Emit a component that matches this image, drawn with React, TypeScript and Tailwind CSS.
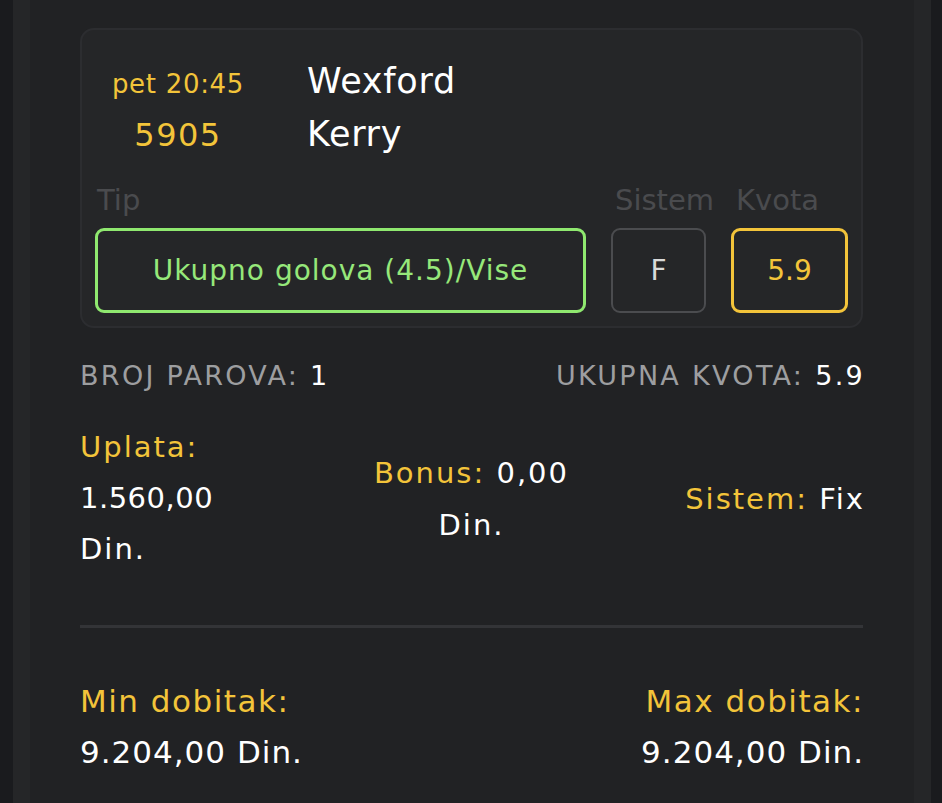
const font = "font-['DejaVu_Sans',sans-serif]";

export default function App() {
  return (
    <div className={`${font} min-h-screen bg-[#1a1b1e] pl-[13px] pr-[11px]`}>
      <div className="min-h-[803px] bg-[#252628] px-[17px]">
        <div className="min-h-[803px] bg-[#212224] pl-[50px] pr-[51px] pt-[28px]">
          {/* match card */}
          <div className="rounded-[14px] border-2 border-[#2c2d30] bg-[#252628] px-[13px] pt-[25px] pb-[13px]">
            <div className="flex h-[53px] items-baseline leading-[53px]">
              <div className="ml-[13px] w-[140px] whitespace-nowrap text-center text-[26px] tracking-[0.7px] text-[#f3c43a]">pet 20:45</div>
              <div className="ml-[59px] text-[35px] tracking-[0.7px] text-white">Wexford</div>
            </div>
            <div className="flex h-[53px] items-baseline leading-[53px]">
              <div className="ml-[13px] w-[140px] whitespace-nowrap text-center text-[32px] tracking-[1.5px] text-[#f3c43a]">5905</div>
              <div className="ml-[59px] text-[35px] tracking-[0.7px] text-white">Kerry</div>
            </div>

            <div className="mt-[21px] flex gap-[25px]">
              <div className="flex-1">
                <div className="mb-[10px] pl-[2px] text-[29px] leading-[36px] text-[#4a4b4e]">Tip</div>
                <div className="flex h-[85px] items-center justify-center rounded-[9px] border-[3px] border-[#8fe86f] text-[28px] tracking-[1px] text-[#96e87a]">
                  Ukupno golova (4.5)/Vise
                </div>
              </div>
              <div className="w-[95px]">
                <div className="mb-[10px] whitespace-nowrap pl-[4px] text-[29px] leading-[36px] text-[#4a4b4e]">Sistem</div>
                <div className="flex h-[85px] items-center justify-center rounded-[9px] border-2 border-[#4b4c4f] text-[28px] text-[#d9d9d9]">
                  F
                </div>
              </div>
              <div className="w-[117px]">
                <div className="mb-[10px] pl-[5px] text-[29px] leading-[36px] text-[#4a4b4e]">Kvota</div>
                <div className="flex h-[85px] items-center justify-center rounded-[9px] border-[3px] border-[#f3c43a] text-[28px] text-[#f3c43a]">
                  5.9
                </div>
              </div>
            </div>
          </div>

          {/* totals */}
          <div className="mt-[32px] flex justify-between text-[27px] leading-[32px] tracking-[2.3px] text-[#9d9ea0]">
            <div>
              BROJ PAROVA: <span className="text-white">1</span>
            </div>
            <div className="-mr-[2px]">
              UKUPNA KVOTA: <span className="text-white">5.9</span>
            </div>
          </div>

          <div className="mt-[30px] grid grid-cols-3 items-center text-[29px] tracking-[2px] text-white">
            <div className="leading-[51px]">
              <div className="text-[#f3c43a]">Uplata:</div>
              <div className="tracking-[0.5px]">1.560,00</div>
              <div>Din.</div>
            </div>
            <div className="text-center leading-[52px]">
              <div>
                <span className="text-[#f3c43a]">Bonus:</span> 0,00
              </div>
              <div>Din.</div>
            </div>
            <div className="-mr-[2px] text-right leading-[50px]">
              <span className="text-[#f3c43a]">Sistem:</span> Fix
            </div>
          </div>

          <div className="mt-[50px] h-[3px] bg-[#333437]" />

          <div className="mt-[48px] flex justify-between text-[31px] leading-[51px] tracking-[1.5px]">
            <div>
              <div className="text-[#f3c43a]">Min dobitak:</div>
              <div className="tracking-[1px] text-white">9.204,00 Din.</div>
            </div>
            <div className="-mr-[1px] text-right">
              <div className="text-[#f3c43a]">Max dobitak:</div>
              <div className="tracking-[1px] text-white">9.204,00 Din.</div>
            </div>
          </div>
        </div>
      </div>
    </div>
  );
}
